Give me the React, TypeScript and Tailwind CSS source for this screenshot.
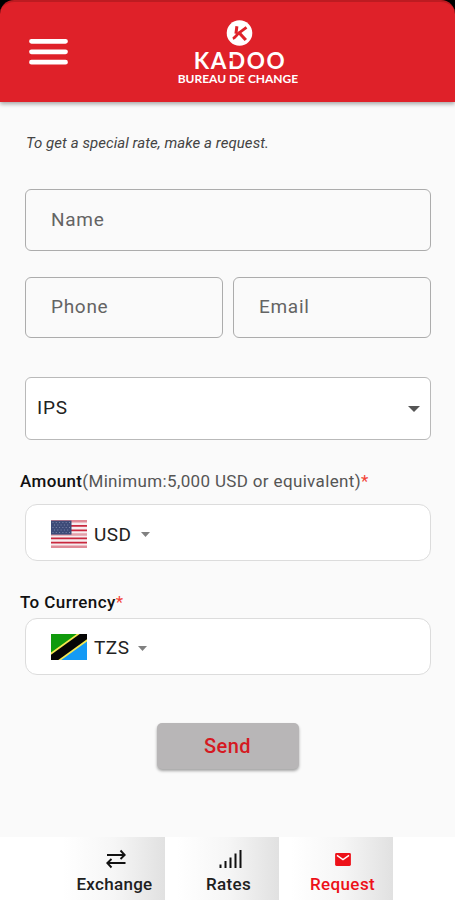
import React from "react";

const Caret = ({ className, fill }: { className: string; fill: string }) => (
  <svg className={className} viewBox="0 0 12 6" fill={fill} preserveAspectRatio="none">
    <path d="M0 0h12L6 6z" />
  </svg>
);

const Logo = () => (
  <svg width="126" height="70" viewBox="175 18 126 70" fill="#fff" fontFamily="Lato, sans-serif">
    <circle cx="239.5" cy="33" r="12.8" />
    <g stroke="#df2129" fill="none">
      <path d="M236.900 26.300l-1 7.500" strokeWidth="3" />
      <path d="M232.800 38.500c3.200-.8 3.800-4.300 7-6.200l6.700-5" strokeWidth="2.800" />
      <path d="M239.800 33.500l6 6.500" strokeWidth="3.200" />
    </g>
    <text x="193.700" y="69.300" fontSize="22.500" fontWeight="700" textLength="91" lengthAdjust="spacing">KADOO</text>
    <path d="M228.500 58h4.200v3.200h-4.200z" fill="#df2129" />
    <text x="177.700" y="82.800" fontSize="10.500" fontWeight="700" textLength="120.500" lengthAdjust="spacingAndGlyphs">BUREAU DE CHANGE</text>
  </svg>
);

const UsaFlag = () => (
  <svg className="mt-[3px]" width="36" height="28" viewBox="0 0 36 28">
    <path fill="#f6eef0" d="M0 0h36v28H0z" />
    <g fill="#c9283e">
      <path opacity=".5" d="M0 0h36v2.600H0z" />
      <path d="M0 5h36v1.700H0zM0 9.500h36v1.700H0z" />
      <path opacity=".4" d="M0 13.300h36v2.500H0z" />
      <path d="M0 17.500h36v1.800H0zM0 21.700h36v1.800H0z" />
      <path opacity=".5" d="M0 25.500h36V28H0z" />
    </g>
    <path fill="#3d4b78" d="M0 .6h20.500V14.600H0z" />
    <g stroke="#7d87aa" strokeWidth="1" strokeDasharray="1 2.300">
      <path d="M1.500 2.500h18M3 5h16M1.500 7.500h18M3 10h16M1.500 12.500h18" />
    </g>
  </svg>
);

const TanzaniaFlag = () => (
  <svg className="mt-px" width="36" height="26" viewBox="0 0 36 26">
    <path fill="#109a0c" d="M0 0h36L0 26z" />
    <path fill="#149af5" d="M36 0v26H0z" />
    <path d="M-5 29.600L41-3.600" stroke="#f5e850" strokeWidth="12" />
    <path d="M-5 29.600L41-3.600" stroke="#050505" strokeWidth="8.500" />
  </svg>
);

const Currency = ({ code, flag }: { code: string; flag: React.ReactNode }) => (
  <div className="mr-6 ml-[25px] flex h-[57px] items-center rounded-xl border border-[#dcdcdc] bg-white pl-[25px]">
    {flag}
    <span className={code === "USD" ? "mt-1.5 ml-[7px] w-[47px] text-[19px] tracking-[0.4px]" : "mt-1 ml-[7px] w-[44px] text-[19px] tracking-[0.5px]"}>{code}</span>
    <Caret className="mt-1 h-[5px] w-[9px]" fill="#808080" />
  </div>
);

const Tab = ({ label, icon, active }: { label: string; icon: React.ReactNode; active?: boolean }) => (
  <div className="flex w-[102px] flex-col items-center bg-linear-to-r from-white via-[#f6f6f6] to-[#e1e1e1] pt-[11px] pl-0.5">
    <div className="flex h-[22px] items-center">{icon}</div>
    <span className={active ? "mt-1 text-[17px] leading-5 font-medium tracking-[0.4px] text-[#ed1119]" : "mt-1 text-[17px] leading-5 font-medium tracking-[0.3px] text-[#202020]"}>{label}</span>
  </div>
);

export default function App() {
  return (
    <div className="flex h-[900px] w-[455px] flex-col overflow-hidden bg-[#fafafa] font-[Roboto,sans-serif] text-[#222]">
      <div className="shrink-0 bg-linear-to-b from-black from-30% to-transparent to-30%">
        <header className="flex h-[102px] items-start rounded-t-[14px] border-t-2 border-[#bd1b21] bg-[#df2129] shadow-[0_2px_4px_rgba(0,0,0,0.35)]">
          <svg className="mt-[36px] ml-[29px]" width="39" height="30" viewBox="0 0 39 30" stroke="#fff" strokeWidth="4.800" strokeLinecap="round">
            <path d="M2.500 3.300h34M2.500 13.800h34M2.500 24.200h34" />
          </svg>
          <div className="mt-4 ml-[107px]"><Logo /></div>
        </header>
      </div>
      <main className="flex h-[735px] shrink-0 flex-col">
        <p className="mt-[31px] ml-[26px] text-[15px] leading-5 tracking-[0.06px] text-[#444] italic">To get a special rate, make a request.</p>
        <div className="mt-[36px] mr-6 ml-[25px] flex h-[62px] items-center rounded-md border border-[#acacac] pl-[25px] text-[19px] tracking-[0.7px] text-[#646464]">Name</div>
        <div className="mt-[26px] mr-6 ml-[25px] flex h-[61px] gap-[10px] text-[19px] tracking-[0.7px] text-[#646464]">
          <div className="flex flex-1 items-center rounded-md border border-[#acacac] pb-px pl-[25px]">Phone</div>
          <div className="flex flex-1 items-center rounded-md border border-[#acacac] pb-px pl-[25px]">Email</div>
        </div>
        <div className="mt-[39px] mr-6 ml-[25px] flex h-[63px] items-center justify-between rounded-md border border-[#b9b9b9] bg-white pr-[10px] pl-[11px] text-[19px] tracking-[0.8px]">
          <span>IPS</span><Caret className="h-1.5 w-[12px]" fill="#555" />
        </div>
        <div className="mt-[31px] ml-5 text-[17px] leading-5 tracking-[0.35px] text-[#555]"><b className="font-medium text-[#111]">Amount</b>(Minimum:5,000 USD or equivalent)<span className="text-[#f34235]">*</span></div>
        <div className="mt-[13px]"><Currency code="USD" flag={<UsaFlag />} /></div>
        <div className="mt-[31px] ml-5 text-[17px] leading-5 tracking-[0.4px]"><b className="font-medium text-[#111]">To Currency</b><span className="text-[#f34235]">*</span></div>
        <div className="mt-1.5"><Currency code="TZS" flag={<TanzaniaFlag />} /></div>
        <button className="mt-[48px] ml-[157px] h-[46px] w-[142px] rounded-[5px] bg-[#b8b6b7] pr-px text-[20px] font-medium tracking-[0.5px] text-[#d51922] shadow-[0_2px_3px_rgba(0,0,0,0.35)]">Send</button>
      </main>
      <nav className="flex grow justify-center gap-3 bg-white">
        <Tab label="Exchange" icon={
          <svg className="ml-0.5" width="20" height="20" viewBox="0 0 20 20" fill="none" stroke="#111" strokeWidth="1.900"><path d="M1 6h17M14.500 1.500L18.700 6 14.500 10M19.500 14H2M5.500 10L1.300 14l4.200 4.500" /></svg>
        } />
        <Tab label="Rates" icon={
          <svg className="ml-0.5" width="24" height="20" viewBox="0 0 24 20" stroke="#111" strokeWidth="2"><path d="M2.500 15.500v3.500M7.500 12v7M12.500 8.500v10.500M17.500 4.500v14.500M22.500 1v18" /></svg>
        } />
        <Tab label="Request" active icon={
          <svg width="16" height="13" viewBox="0 0 17 14"><rect width="17" height="14" rx="1.500" fill="#ed1119" /><path d="M2 2.500l6.500 4.700L15 2.500" stroke="#fff" strokeWidth="1.500" fill="none" /></svg>
        } />
      </nav>
    </div>
  );
}
